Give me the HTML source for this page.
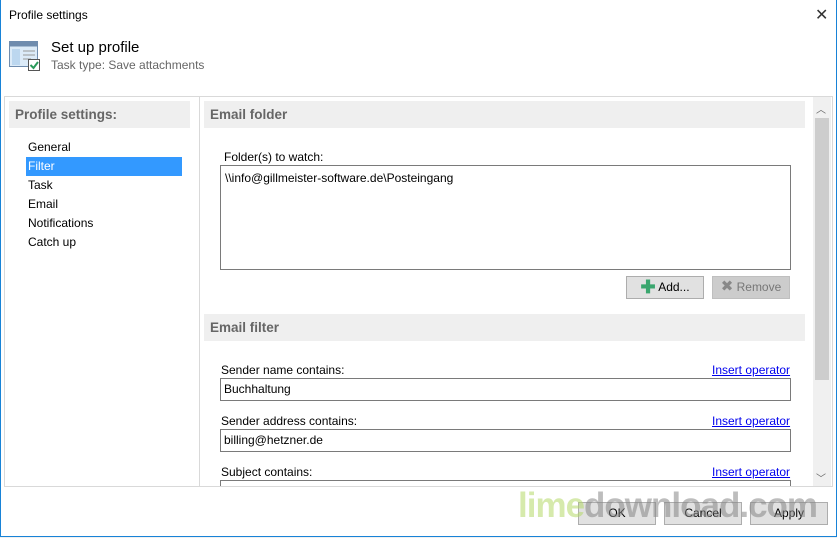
<!DOCTYPE html>
<html><head><style>
body{margin:0;width:837px;height:538px;background:#f0f0f0;font-family:"Liberation Sans",sans-serif;font-size:12px;color:#000;position:relative;overflow:hidden}
.a{position:absolute}
.win{left:0;top:0;width:835px;height:536px;border:1px solid #1883d7;border-top:none;background:#fff}
.inp{background:#fff;border:1px solid #7a7a7a;box-sizing:border-box}
.btn{background:#e1e1e1;border:1px solid #adadad;box-sizing:border-box;text-align:center;line-height:20px}
.hdr{background:#efefef;font-weight:bold;color:#666;font-size:13.5px;padding-left:6px;line-height:27px;box-sizing:border-box}
a{color:#0000ee;text-decoration:underline}
</style></head><body>
<div class="a win"></div>
<div class="a" style="left:9px;top:8px;font-size:12px">Profile settings</div>
<div class="a" style="left:815px;top:5px;font-size:16px;color:#333">✕</div>
<svg class="a" style="left:9px;top:41px" width="32" height="30"><rect x="0.5" y="0.5" width="28" height="25" fill="#dcebf8" stroke="#6f8cae"/><rect x="0.5" y="0.5" width="28" height="5" fill="#6f8cae"/><rect x="3" y="8" width="8" height="16" fill="#bcd7ef"/><line x1="14" y1="10" x2="26" y2="10" stroke="#999"/><line x1="14" y1="14" x2="26" y2="14" stroke="#999"/><line x1="14" y1="18" x2="22" y2="18" stroke="#999"/><rect x="19.5" y="18.5" width="11" height="11" fill="#fff" stroke="#555"/><path d="M21.5 24l3 3 4.5-6" stroke="#2a9a5a" stroke-width="2" fill="none"/></svg>
<div class="a" style="left:51px;top:39px;font-size:15px">Set up profile</div>
<div class="a" style="left:51px;top:58px;color:#666">Task type: Save attachments</div>
<div class="a" style="left:4px;top:96px;width:829px;height:391px;border:1px solid #d9d9d9;background:#fff;box-sizing:border-box"></div>
<div class="a hdr" style="left:9px;top:101px;width:181px;height:27px">Profile settings:</div>
<div class="a" style="left:199px;top:97px;width:1px;height:389px;background:#d9d9d9"></div>
<div class="a" style="left:26px;top:157px;width:156px;height:19px;background:#3399ff"></div>
<div class="a" style="left:28px;top:138px;line-height:19px">General<br><span style="color:#fff">Filter</span><br>Task<br>Email<br>Notifications<br>Catch up</div>
<div class="a hdr" style="left:204px;top:101px;width:601px;height:27px">Email folder</div>
<div class="a" style="left:224px;top:150px">Folder(s) to watch:</div>
<div class="a inp" style="left:220px;top:165px;width:571px;height:105px;padding:5px 4px">\\info@gillmeister-software.de\Posteingang</div>
<div class="a btn" style="left:626px;top:276px;width:78px;height:23px"><span style="color:#3aa66e;font-weight:bold;font-size:18px;vertical-align:-2px">✚</span> Add...</div>
<div class="a btn" style="left:712px;top:276px;width:78px;height:23px;background:#ccc;border-color:#bfbfbf;color:#777"><span style="font-size:15px;color:#888">✖</span> Remove</div>
<div class="a hdr" style="left:204px;top:314px;width:601px;height:27px">Email filter</div>
<div class="a" style="left:221px;top:363px">Sender name contains:</div>
<div class="a" style="left:712px;top:363px"><a>Insert operator</a></div>
<div class="a inp" style="left:220px;top:378px;width:571px;height:23px;padding:3px 3px">Buchhaltung</div>
<div class="a" style="left:221px;top:414px">Sender address contains:</div>
<div class="a" style="left:712px;top:414px"><a>Insert operator</a></div>
<div class="a inp" style="left:220px;top:429px;width:571px;height:23px;padding:3px 3px">billing@hetzner.de</div>
<div class="a" style="left:221px;top:465px">Subject contains:</div>
<div class="a" style="left:712px;top:465px"><a>Insert operator</a></div>
<div class="a inp" style="left:220px;top:480px;width:571px;height:6px;border-bottom:none"></div>
<div class="a" style="left:813px;top:97px;width:18px;height:389px;background:#f0f0f0"></div>
<div class="a" style="left:815px;top:118px;width:14px;height:262px;background:#cdcdcd"></div>
<div class="a" style="left:816px;top:101px;color:#666;font-size:10px">︿</div>
<div class="a" style="left:816px;top:470px;color:#666;font-size:10px">﹀</div>
<div class="a btn" style="left:578px;top:502px;width:78px;height:23px">OK</div>
<div class="a btn" style="left:664px;top:502px;width:78px;height:23px">Cancel</div>
<div class="a btn" style="left:750px;top:502px;width:78px;height:23px">Apply</div>
<div class="a" style="left:518px;top:486px;width:315px;overflow:hidden;white-space:nowrap;font-size:35px;font-weight:bold;letter-spacing:-1px;opacity:.55"><span style="color:#b5d96a">lime</span><span style="color:#888">download.com</span></div>
</body></html>
